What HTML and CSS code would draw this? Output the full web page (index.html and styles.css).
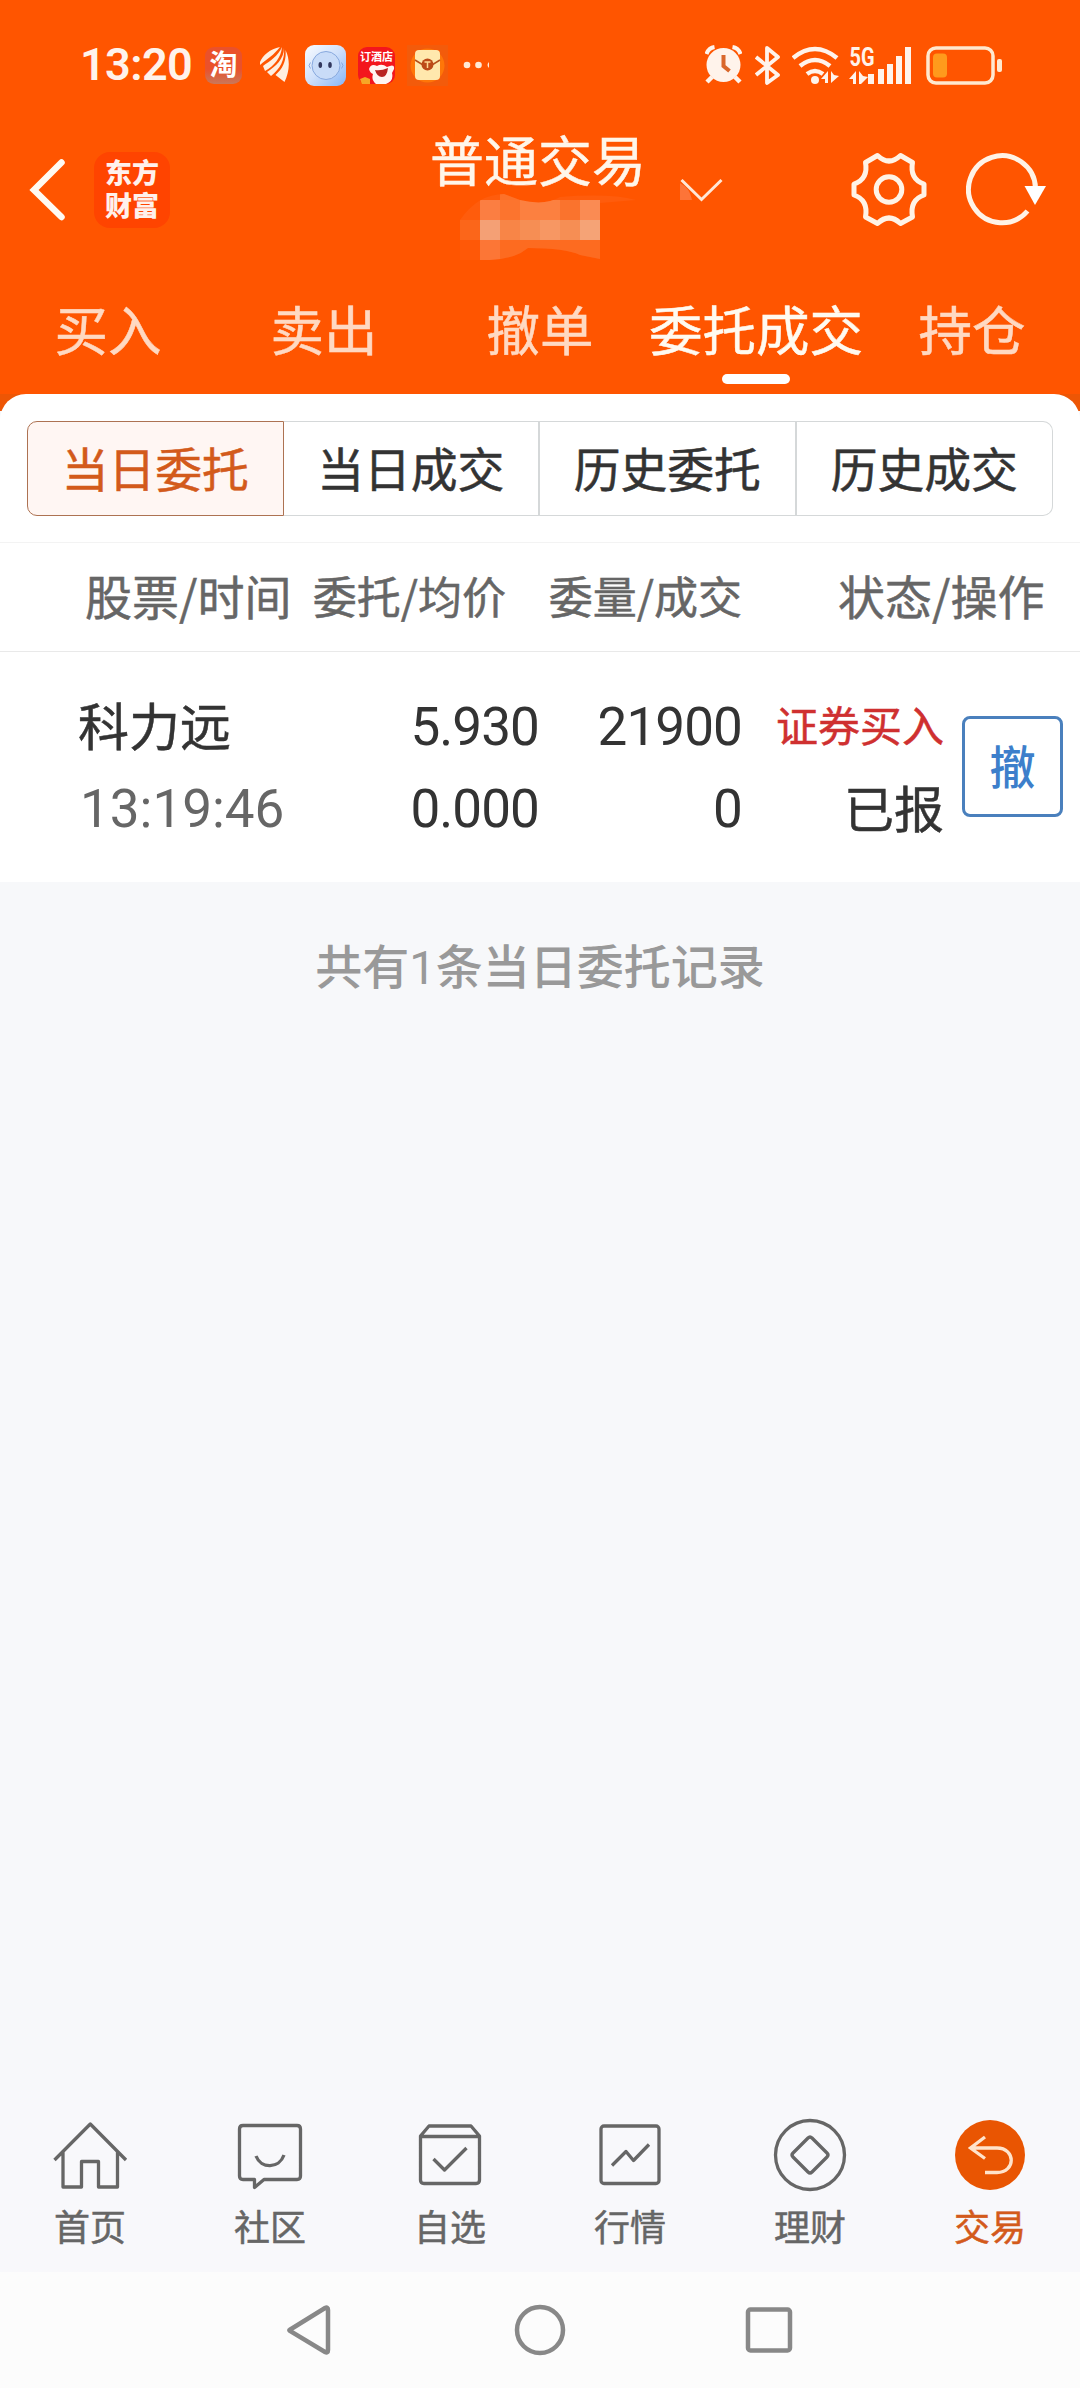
FILE: index.html
```html
<!DOCTYPE html>
<html lang="zh-CN">
<head>
<meta charset="utf-8">
<title>普通交易</title>
<link rel="stylesheet" href="styles.css">
</head>
<body>
<header class="top">
  <div class="status">
    <span class="clock">13:20</span>
    <div class="apps">
      <span class="app taobao">淘</span>
      <svg class="feather" width="29" height="36" viewBox="0 0 29 36"><path d="M20 0C10 2 3 8 0 15v3C7 12 14 8 20 0z"/><path d="M22 0C18 9 10 14 3 19l2 5C14 19 21 11 22 0z"/><path d="M24 1c0 11-8 18-17 24l4 4c9-7 14-16 13-28z"/><path d="M25.500 3c5 10 4 22-1 32l-9-7c8-7 11-15 10-25z"/></svg>
      <svg class="bot" width="41" height="41" viewBox="0 0 41 41"><defs><linearGradient id="sky" x1="0" y1="0" x2="1" y2="1"><stop offset="0" stop-color="#fafcff"/><stop offset=".5" stop-color="#cfe0fa"/><stop offset="1" stop-color="#86b5f5"/></linearGradient></defs><rect width="41" height="41" rx="9" fill="url(#sky)"/><circle cx="21" cy="20.500" r="14" fill="#c9dcf8" stroke="#88a9de"/><path d="M5.500 17.500q-3 3 0 6M36.500 17.500q3 3 0 6" fill="none" stroke="#88a9de"/><ellipse cx="15.300" cy="20" rx="1.800" ry="3" fill="#33395e"/><ellipse cx="25" cy="20" rx="1.800" ry="3" fill="#33395e"/></svg>
      <span class="app jd"><span class="jd-text">订酒店</span><svg width="37" height="20" viewBox="0 0 37 20"><path d="M11 5Q13-1 19 2Q24-1 29 3Q37-1 36 5L34 9Q36 17 28 20H18Q13 16 15 10Q12 9 11 5z" fill="#fff5f2"/><path d="M17 6q6 1 13-2-1 9-6 9t-7-7z" fill="#b92423"/><path d="M2 15l5-2 5 2v5H4z" fill="#f6a626"/></svg></span>
      <svg class="packet" width="41" height="41" viewBox="0 0 41 41"><rect width="41" height="41" fill="#f35b0b"/><circle cx="20.500" cy="20.500" r="17" fill="#ff7608"/><rect x="8" y="5" width="25" height="30" rx="4" fill="#ffe8ad"/><path d="M8 15l8 5h9l8-5" fill="none" stroke="#b5501c" stroke-width="1.500"/><circle cx="20.500" cy="19.500" r="6" fill="#bd4a18"/><path d="M17.500 17h6M20.500 17v6" stroke="#ffd690" stroke-width="1.500"/></svg>
      <svg class="more" width="27" height="10" viewBox="0 0 27 10"><circle cx="4" cy="5" r="3.300"/><circle cx="15.500" cy="5" r="3.300"/><path d="M26 2q-3 3 0 6z"/></svg>
    </div>
    <div class="signals">
      <svg width="37" height="39" viewBox="706 45 37 39"><circle cx="724.500" cy="65" r="17" fill="#fff3eb"/><path d="M707.500 54q2-6 8-7M741.500 54q-2-6-8-7" fill="none" stroke="#fff3eb" stroke-width="4"/><path d="M713 77l-5 5M736 77l5 5" stroke="#fff3eb" stroke-width="4.500"/><path d="M724.500 55v11l6 5" fill="none" stroke="#d9672c" stroke-width="4"/></svg>
      <svg width="26" height="40" viewBox="756 44 26 40"><path d="M757 56l22 18-11 8V47l11 9-22 18" fill="none" stroke="#fff3eb" stroke-width="3.800" stroke-linejoin="round"/></svg>
      <svg width="47" height="40" viewBox="793 44 47 40"><g fill="none" stroke="#fff3eb" stroke-width="4.500"><path d="M794 57q22-18 44 0M801 65q15-12 30 0M808 73q8-6 16 0"/></g><circle cx="816" cy="79" r="4" fill="#fff3eb"/><path d="M829 70v12h-3v-4h-4zM832 70v12l8-7-5-1z" fill="#fff3eb"/></svg>
      <svg class="cell" width="63" height="40" viewBox="850 44 63 40"><text class="fiveg" x="850.500" y="64.500" textLength="25" lengthAdjust="spacingAndGlyphs">5G</text><path fill="#fff3eb" d="M857 70v13h-3v-5h-4zM860 70v13h2l7-7-5-1zM869 73h6v10h-6zM879 68h6v15h-6zM888 63h6v20h-6zM897 55h6v28h-6zM906 46h6v37h-6z"/></svg>
      <svg width="77" height="40" viewBox="927 44 77 40"><rect x="929" y="47" width="65" height="35" rx="8" fill="none" stroke="#ffe9cf" stroke-width="3.500"/><rect x="934" y="52.500" width="14" height="24" rx="4" fill="#ff9a1c"/><rect x="998" y="58" width="5" height="13" rx="2" fill="#ffe9cf"/></svg>
    </div>
  </div>

  <div class="titlebar">
    <div class="left">
      <svg width="40" height="66" viewBox="27 157 40 66"><path d="M61.500 162.500L34 190l27.500 27" fill="none" stroke="#fffaf2" stroke-width="6.500" stroke-linecap="round"/></svg>
      <span class="brand">东方<br>财富</span>
    </div>
    <div class="center">
      <h1>普通交易</h1>
      <svg class="mosaic" width="236" height="80" viewBox="460 182 236 80"><defs><clipPath id="smudge"><path d="M460 220Q478 194 504 194L520 200Q545 206 560 197Q610 193 636 200L600 203V259L580 255Q565 248 528 248Q515 259 490 260H460z"/></clipPath></defs>
      <g clip-path="url(#smudge)"><path fill="#ff5c0c" d="M460 190h180v70H460z"/><path fill="#fd7129" d="M500 190h20v10h-20z"/><path fill="#fb7e42" d="M480 200h20v20h-20z"/><path fill="#fc742e" d="M500 200h20v20h-20z"/><path fill="#fc8040" d="M520 200h40v20h-40z"/><path fill="#fa732d" d="M560 200h20v20h-20z"/><path fill="#fa8b53" d="M580 200h20v20h-20z"/><path fill="#fb661a" d="M460 220h20v20h-20z"/><path fill="#f4a075" d="M480 220h20v20h-20z"/><path fill="#f88547" d="M500 220h20v20h-20z"/><path fill="#f68e54" d="M520 220h20v20h-20zM560 220h20v20h-20z"/><path fill="#f79763" d="M540 220h20v20h-20z"/><path fill="#f5a376" d="M580 220h20v20h-20z"/><path fill="#ff5807" d="M460 240h20v20h-20z"/><path fill="#fc7636" d="M480 240h20v20h-20z"/><path fill="#fd6b20" d="M500 240h100v20H500z"/></g><path fill="#fd7438" d="M680 183Q690 188 692 200h-12z"/></svg>
    </div>
    <svg class="chev" width="44" height="26" viewBox="679 176 44 26"><path d="M681.500 179l20 19.500 20-19.500" fill="none" stroke="#ffe7d6" stroke-width="3"/></svg>
    <div class="right">
      <svg width="78" height="76" viewBox="850 152 78 76"><g fill="none" stroke="#fff3e6" stroke-width="5" stroke-linejoin="round"><path d="M877.500 155.500Q889 166.500 900.500 155.500L912.500 162.500Q909.500 179 924 184V195Q909.500 200 912.500 217L900.500 223.500Q889 212.500 877.500 223.500L865.500 217Q868.500 200 854 195V184Q868.500 179 865.500 162.500Z"/><circle cx="889" cy="189.500" r="12.800"/></g></svg>
      <svg width="82" height="76" viewBox="966 152 82 76"><path d="M1027.500 211A33.500 33.500 0 1 1 1035.500 188" fill="none" stroke="#fff3e6" stroke-width="5"/><path d="M1024.500 186h21.500l-11 19z" fill="#fff"/></svg>
    </div>
  </div>

  <nav class="tabs">
    <a>买入</a><a>卖出</a><a>撤单</a><a class="on">委托成交</a><a>持仓</a>
  </nav>
</header>

<main>
  <section class="sheet">
    <div class="segments">
      <button class="seg on">当日委托</button><button class="seg">当日成交</button><button class="seg">历史委托</button><button class="seg">历史成交</button>
    </div>
    <div class="cols">
      <span class="big">股票/时间</span><span>委托/均价</span><span>委量/成交</span><span class="big">状态/操作</span>
    </div>
    <div class="order">
      <div class="name"><b>科力远</b><i>13:19:46</i></div>
      <div class="num">5.930<br>0.000</div>
      <div class="num">21900<br>0</div>
      <div class="state"><b>证券买入</b><span>已报</span></div>
      <button class="cancel">撤</button>
    </div>
  </section>
  <p class="total">共有<span>1</span>条当日委托记录</p>
</main>

<nav class="dock">
  <a><svg width="80" height="80" viewBox="50 2115 80 80"><path d="M54.500 2160l35.800-36 35.700 36M63 2152v35h18.500v-25.500h17V2187h19v-35"/></svg>首页</a>
  <a><svg width="80" height="80" viewBox="230 2115 80 80"><path d="M243 2125.500h54q3.500 0 3.500 3.500v47q0 3.500-3.500 3.500h-33l-9.500 8v-8H243q-3.500 0-3.500-3.500v-47q0-3.500 3.500-3.500zM256 2156c5 13 23 13 28-1"/></svg>社区</a>
  <a><svg width="80" height="80" viewBox="410 2115 80 80"><path d="M420.500 2136l8.500-10h42l8.500 10v44q0 3.500-3.500 3.500h-52q-3.500 0-3.500-3.500zM420.500 2136.500h59M433.500 2159l11 11 22-22"/></svg>自选</a>
  <a><svg width="80" height="80" viewBox="590 2115 80 80"><rect x="601" y="2126" width="58" height="57.500" rx="3"/><path d="M612 2165.500l14-14 7.500 9 15.500-16"/></svg>行情</a>
  <a><svg width="80" height="80" viewBox="770 2115 80 80"><circle cx="810" cy="2155" r="34.500"/><path d="M808 2138q2-2 4 0l15 15q2 2 0 4l-15 15q-2 2-4 0l-15-15q-2-2 0-4z"/></svg>理财</a>
  <a class="on"><svg width="80" height="80" viewBox="950 2115 80 80"><circle class="disc" cx="990" cy="2155" r="35"/><path d="M985 2137l-14.500 11 14.500 10.500M971 2148h26c19 0 19 24.500 0 24.500h-12"/></svg>交易</a>
</nav>
<footer class="system">
  <svg width="46" height="52" viewBox="285 2304 46 52"><path d="M289.500 2330L325 2308q3-1.500 3 2v40q0 3.500-3 2L290 2331q-1-.8-.5-1z"/></svg>
  <svg width="52" height="52" viewBox="514 2304 52 52"><circle cx="540" cy="2330" r="23"/></svg>
  <svg width="48" height="52" viewBox="745 2304 48 52"><rect x="748" y="2309.500" width="42" height="41" rx="2.500"/></svg>
</footer>
</body>
</html>
```
FILE: styles.css
```css
* { box-sizing: border-box; margin: 0; padding: 0; }
body {
  width: 1080px; height: 2388px; display: flex; flex-direction: column; overflow: hidden;
  background: #f7f8fa; color: #333; font-family: "Noto Sans CJK SC", sans-serif;
}
svg { display: block; flex: none; }
button { font-family: inherit; background: none; border: 0; }
b, i { font-weight: 400; font-style: normal; }
h1, .tabs, .seg, .cols, .name b, .state, .dock a { -webkit-text-stroke: .5px currentColor; }

.top { height: 394px; background: #ff5500; color: #fffaf2; }

.status { height: 130px; display: flex; align-items: center; padding: 0 77px 0 80px; }
.clock { width: 125px; font: 600 45px/60px Roboto, sans-serif; color: #fff3eb; letter-spacing: -.6px; }
.apps { display: flex; align-items: center; }
.app { width: 37px; height: 37px; border-radius: 9px; color: #fff; }
.taobao { background: linear-gradient(#ea512b 60%, #c9785a); font-size: 28px; font-weight: 700; line-height: 33px; text-align: center; }
.feather { margin-left: 18px; fill: #ffefe0; }
.bot { margin-left: 16px; }
.jd { margin-left: 12px; background: #f3161d; display: flex; flex-direction: column; align-items: center; padding-top: 2px; }
.jd-text { font-size: 11px; font-weight: 700; line-height: 15px; white-space: nowrap; }
.packet { margin-left: 12px; }
.more { margin-left: 15px; fill: #ffe9d5; }
.signals { margin-left: auto; display: flex; gap: 13px; }
.signals svg:nth-child(3) { margin-left: -2px; }
.signals svg:nth-child(4) { margin-left: -3px; }
.signals svg:nth-child(5) { margin-left: 1px; }
.cell { overflow: visible; }
.fiveg { font: 700 26px Roboto, sans-serif; fill: #fff3eb; }

.titlebar { height: 120px; display: flex; align-items: center; padding: 0 32px 0 27px; }
.left { display: flex; align-items: center; gap: 27px; width: 405px; }
.brand { width: 76px; height: 76px; border-radius: 16px; background: #ff4400; color: #fff1ec; padding-top: 3px; font-size: 27px; font-weight: 900; line-height: 33px; text-align: center; }
.center { width: 247px; height: 130px; }
.center h1 { font-size: 54px; font-weight: 400; line-height: 68px; height: 57px; margin-left: -2px; color: #fff6ea; white-space: nowrap; }
.mosaic { margin-left: 28px; }
.right { margin-left: auto; display: flex; gap: 38px; }

.tabs { height: 144px; display: grid; grid-template-columns: repeat(5, 1fr); }
.tabs a { display: flex; flex-direction: column; align-items: center; font-size: 53.500px; line-height: 80px; padding-top: 38px; color: #ffd9c2; white-space: nowrap; }
.tabs .on { color: #fffaf0; }
.tabs .on::after { content: ""; width: 68px; height: 10px; margin-top: 6px; border-radius: 5px; background: #fff; }

main { flex: 1; background: linear-gradient(#ed5605 17px, #f7f8fa 17px); }
.sheet { height: 488px; background: #fff; border-radius: 26px 26px 0 0; }
.segments { height: 148px; padding: 27px 27px 0; display: grid; grid-template-columns: repeat(4, 1fr); }
.seg { height: 95px; border: 1px solid #d5d8d9; border-right-width: 2px; border-left: 0; padding-bottom: 4px; font-size: 46.800px; line-height: 86px; color: #333; }
.seg.on { border: 1px solid #ad7252; border-radius: 10px 0 0 10px; background: #fff6f3; color: #d35a1b; }
.seg:last-child { border-right-width: 1px; border-radius: 0 10px 10px 0; }
.cols { height: 110px; border: solid #f3f3f3; border-width: 1px 0; border-bottom-color: #e9e9e9; display: grid; grid-template-columns: 207px 214px 236px 302.500px; padding-left: 85px; text-align: right; font-size: 44px; line-height: 104px; color: #666; white-space: nowrap; }
.cols .big { font-size: 47px; }
.cols .big:first-child { text-align: left; }

.order { height: 230px; padding: 34px 17px 0 78px; display: grid; grid-template-columns: 215px 246px 203px 202px 119px; line-height: 82px; text-align: right; }
.order > :last-child { justify-self: end; }
.name { text-align: left; font-size: 51px; }
.name b, .name i, .state b, .state span { display: block; height: 82px; line-height: 76px; }
.name i { font: 400 53px/82px Roboto, sans-serif; color: #666; padding-left: 2px; letter-spacing: 0; }
.num { font: 400 53px/82px Roboto, sans-serif; letter-spacing: -.9px; }
.state { font-size: 50px; }
.state b { font-size: 42px; line-height: 76px; color: #cf3030; }
.cancel { width: 101px; height: 101px; margin-top: 30px; border: 3px solid #4a80bd; border-radius: 8px; padding-bottom: 5px; color: #3d7fcb; font-size: 46px; font-weight: 500; line-height: 86px; text-align: center; }
.total { padding-top: 42px; font-size: 47px; line-height: 80px; text-align: center; color: #999; font-weight: 500; }
.total span { font-family: Roboto, sans-serif; font-weight: 400; }

.dock { height: 182px; background: #f8f8fb; display: grid; grid-template-columns: repeat(6, 1fr); padding-top: 25px; }
.dock a { display: flex; flex-direction: column; align-items: center; font-size: 36px; line-height: 60px; color: #666; }
.dock svg { fill: none; stroke: #666; stroke-width: 3.300; stroke-linejoin: round; }
.dock .on { color: #d35a1b; }
.dock .on svg { stroke: #ffe3cb; stroke-linejoin: miter; }
.dock .disc { fill: #e95502; stroke: none; }
.system { height: 116px; background: #fcfcfc; display: flex; align-items: center; justify-content: center; gap: 183px; padding-right: 2px; }
.system svg { fill: none; stroke: #888; stroke-width: 4.500; }
.system svg:last-child { margin-left: -4px; }
```
